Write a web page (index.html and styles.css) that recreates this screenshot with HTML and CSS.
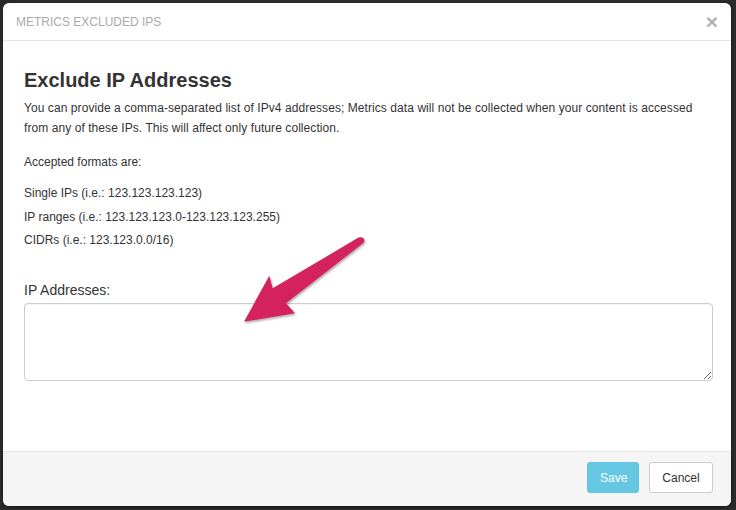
FILE: index.html
```html
<!DOCTYPE html>
<html>
<head>
<meta charset="utf-8">
<link rel="stylesheet" href="styles.css">
</head>
<body>
<div class="modal">
  <div class="modal-header">
    <span class="modal-title">METRICS EXCLUDED IPS</span>
    <span class="close">&times;</span>
  </div>
  <div class="modal-body">
    <h2 class="heading">Exclude IP Addresses</h2>
    <p class="intro">You can provide a comma-separated list of IPv4 addresses; Metrics data will not be collected when your content is accessed from any of these IPs. This will affect only future collection.</p>
    <p class="formats-title">Accepted formats are:</p>
    <div class="formats">
      <div>Single IPs (i.e.: 123.123.123.123)</div>
      <div>IP ranges (i.e.: 123.123.123.0-123.123.123.255)</div>
      <div>CIDRs (i.e.: 123.123.0.0/16)</div>
    </div>
    <label class="field-label">IP Addresses:</label>
    <textarea class="ip-input"></textarea>
    <svg class="arrow" width="140" height="100" viewBox="230 230 140 100">
      <defs>
        <filter id="sh" x="-20%" y="-20%" width="140%" height="140%">
          <feDropShadow dx="1" dy="1.5" stdDeviation="1" flood-color="#000" flood-opacity="0.35"/>
        </filter>
      </defs>
      <path filter="url(#sh)" fill="#d4245f" d="M244 321.7 L269.3 275.7 L272.7 288.3 L358.5 237.6 Q363.5 236 364.5 240.5 Q364 242.5 362 244 L286 303.3 L295 313.3 Z"/>
    </svg>
  </div>
  <div class="modal-footer">
    <button class="btn btn-save">Save</button>
    <button class="btn btn-cancel">Cancel</button>
  </div>
</div>
</body>
</html>
```

FILE: styles.css
```css
html, body {
  margin: 0;
  padding: 0;
  height: 100%;
}
body {
  background: #2b2b2b;
  font-family: "Liberation Sans", Arial, Helvetica, sans-serif;
  color: #333;
  padding: 3px 5px 4px 3px;
  box-sizing: border-box;
  display: flex;
}
.modal {
  flex: 1;
  background: #fff;
  border-radius: 6px;
  display: flex;
  flex-direction: column;
  overflow: hidden;
  box-shadow: 0 1px 3px rgba(0,0,0,0.6);
}
.modal-header {
  height: 37px;
  border-bottom: 1px solid #e5e5e5;
  display: flex;
  align-items: center;
  justify-content: space-between;
  padding: 0 13px 0 13px;
}
.modal-title {
  font-size: 12px;
  color: #aaa;
  padding-top: 1px;
}
.close {
  font-size: 21px;
  font-weight: bold;
  color: #b0b0b0;
  line-height: 1;
  padding-bottom: 1px;
}
.modal-body {
  flex: 1;
  position: relative;
  padding: 0 18px 0 21px;
  display: flex;
  flex-direction: column;
}
.heading {
  font-size: 20px;
  font-weight: bold;
  line-height: 24px;
  margin: 27px 0 5px;
  color: #333;
}
.intro {
  font-size: 12px;
  line-height: 20px;
  margin: 1px 0 0;
  color: #333;
  letter-spacing: 0.07px;
}
.formats-title {
  font-size: 12px;
  line-height: 20px;
  margin: 14px 0 0;
}
.formats {
  font-size: 12px;
  line-height: 23.5px;
  margin-top: 10px;
}
.field-label {
  font-size: 14px;
  line-height: 20px;
  margin-top: 27px;
  color: #333;
}
.ip-input {
  margin-top: 3px;
  height: 78px;
  box-sizing: border-box;
  border: 1px solid #ccc;
  border-radius: 4px;
  box-shadow: inset 0 1px 1px rgba(0,0,0,0.05);
  font-family: inherit;
  font-size: 12px;
  padding: 6px 8px;
  outline: none;
}
.arrow {
  position: absolute;
  left: 227px;
  top: 189px;
  overflow: visible;
}
.modal-footer {
  height: 55px;
  border-top: 1px solid #e5e5e5;
  background: #f5f5f5;
  display: flex;
  justify-content: flex-end;
  align-items: flex-start;
  gap: 10px;
  padding: 10px 18px 0 0;
  box-sizing: border-box;
}
.btn {
  height: 31px;
  font-family: inherit;
  font-size: 12px;
  border-radius: 3px;
  padding: 0 12px;
  border: 1px solid;
}
.btn-save {
  width: 52px;
  background: #66c7e2;
  border-color: #62c4e0;
  color: #fff;
}
.btn-cancel {
  width: 64px;
  background: #fff;
  border-color: #ccc;
  color: #333;
}
```
